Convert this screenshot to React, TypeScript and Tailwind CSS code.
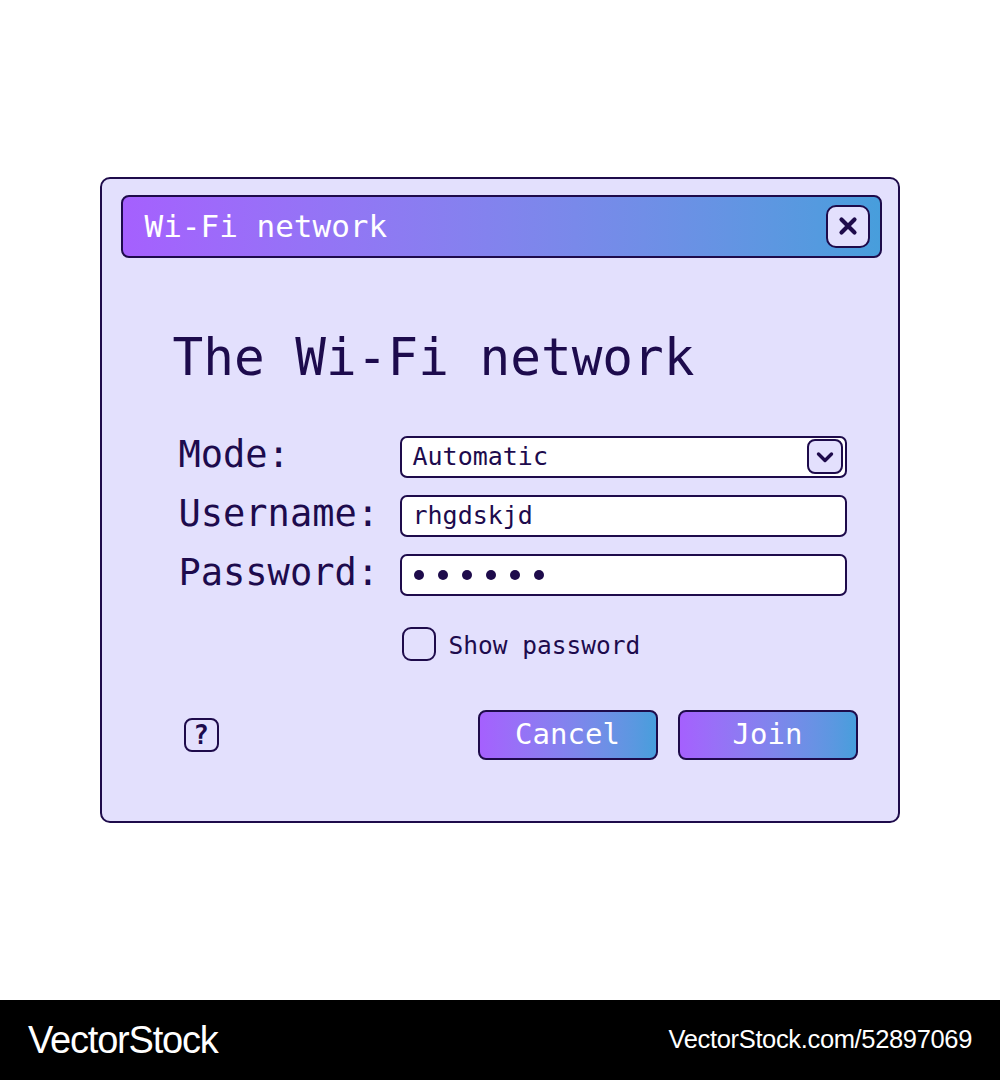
import React from "react";

const mono = { fontFamily: '"DejaVu Sans Mono", "Liberation Mono", monospace' };

function CloseIcon() {
  return (
    <svg width="22" height="22" viewBox="0 0 22 22" fill="none">
      <path d="M4.5 4.5L17.5 17.5M17.5 4.5L4.5 17.5" stroke="#1e0b4b" strokeWidth="4.2" strokeLinecap="round" />
    </svg>
  );
}

function ChevronIcon() {
  return (
    <svg width="22" height="22" viewBox="0 0 22 22" fill="none">
      <path d="M4.5 8L11 14.5L17.5 8" stroke="#1e0b4b" strokeWidth="3.4" strokeLinecap="round" strokeLinejoin="round" />
    </svg>
  );
}

function Field({ label, children }: { label: string; children: React.ReactNode }) {
  return (
    <div className="flex items-center">
      <div className="w-[221px] pb-[5px] text-[37px] leading-none text-[#1d0b4d]">{label}</div>
      <div className="relative flex h-[42px] w-[447px] items-center rounded-[7px] border-2 border-[#1e0b4b] bg-white pl-[11px] pr-[2px] text-[25px] text-[#1d0b4d]">
        {children}
      </div>
    </div>
  );
}

export default function App() {
  return (
    <div className="w-[1000px] bg-white" style={mono}>
      <div className="h-[1000px] pt-[177px]">
        {/* Dialog window */}
        <div className="ml-[100px] h-[646px] w-[800px] rounded-[10px] border-[2.5px] border-[#1e0b4b] bg-[#e3e0fd] pl-[18.5px] pr-[16.5px] pt-[15.5px]">
          {/* Title bar */}
          <div className="flex h-[63px] items-center justify-between rounded-[8px] border-2 border-[#1e0b4b] bg-linear-to-r from-[#a560fe] to-[#479edc] pl-[22px] pr-[10px]">
            <span className="text-[31px] leading-none text-white">Wi-Fi network</span>
            <button className="flex h-[43px] w-[44px] items-center justify-center rounded-[10px] border-2 border-[#1e0b4b] bg-[#e3e0fd]">
              <CloseIcon />
            </button>
          </div>

          <h1 className="ml-[52px] mt-[74px] text-[51px] leading-none text-[#1d0b4d]">The Wi-Fi network</h1>

          {/* Form */}
          <div className="ml-[58px] mt-[53px] flex flex-col gap-[17px]">
            <Field label="Mode:">
              <span className="flex-1">Automatic</span>
              <span className="flex h-[35px] w-[36px] items-center justify-center rounded-[8px] border-2 border-[#1e0b4b] bg-[#e3e0fd]">
                <ChevronIcon />
              </span>
            </Field>
            <Field label="Username:">
              <span>rhgdskjd</span>
            </Field>
            <Field label="Password:">
              <span className="flex gap-[14px] pl-[1px]">
                {[0, 1, 2, 3, 4, 5].map((i) => (
                  <span key={i} className="h-[10px] w-[10px] rounded-full bg-[#1e0b4b]" />
                ))}
              </span>
            </Field>
          </div>

          <div className="ml-[281px] mt-[31px] flex items-center gap-[13px]">
            <span className="h-[34px] w-[34px] rounded-[9px] border-2 border-[#1e0b4b]" />
            <span className="pt-[6px] text-[24.5px] leading-none text-[#1d0b4d]">Show password</span>
          </div>

          {/* Footer buttons */}
          <div className="mt-[49px] flex items-center pl-[63px] pr-[24px]">
            <span className="flex h-[34px] w-[35px] items-center justify-center rounded-[8px] border-2 border-[#1e0b4b] text-[26px] font-bold leading-none text-[#1d0b4d]">
              ?
            </span>
            <div className="ml-auto flex gap-[20px]">
              <button className="h-[50px] w-[180px] rounded-[8px] border-2 border-[#1e0b4b] bg-linear-to-r from-[#a560fe] to-[#479edc] text-[29px] leading-none text-white">
                Cancel
              </button>
              <button className="h-[50px] w-[180px] rounded-[8px] border-2 border-[#1e0b4b] bg-linear-to-r from-[#a560fe] to-[#479edc] text-[29px] leading-none text-white">
                Join
              </button>
            </div>
          </div>
        </div>
      </div>

      {/* Stock watermark bar */}
      <div
        className="flex h-[80px] items-center justify-between bg-black px-[28px] text-white"
        style={{ fontFamily: '"Liberation Sans", Arial, sans-serif' }}
      >
        <span className="text-[38px] leading-none tracking-[-1.2px]">VectorStock</span>
        <span className="text-[25.5px] leading-none tracking-[-0.35px]">VectorStock.com/52897069</span>
      </div>
    </div>
  );
}
